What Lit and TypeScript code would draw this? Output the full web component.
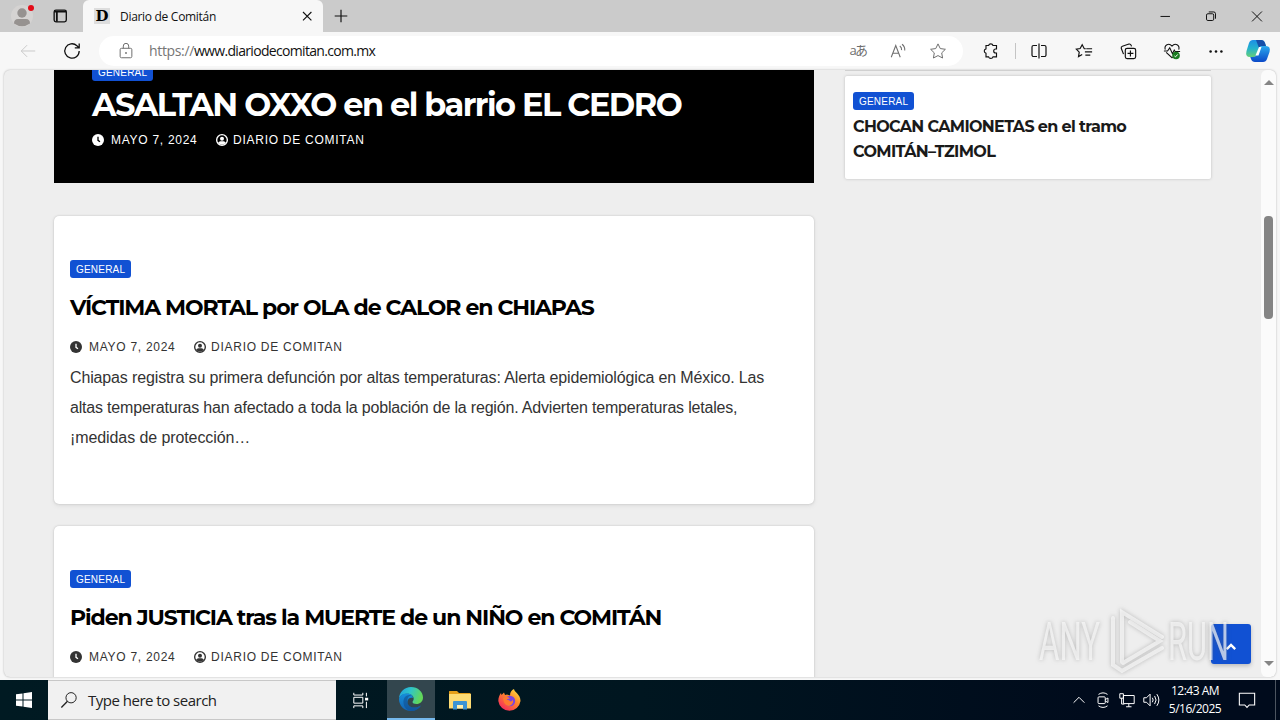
import { LitElement, html, svg, css, nothing } from "lit";
import { customElement, property } from "lit/decorators.js";

interface Post {
  title: string;
  date: string;
  author: string;
  excerpt?: string[];
}

const POSTS: Post[] = [
  {
    title: "VÍCTIMA MORTAL por OLA de CALOR en CHIAPAS",
    date: "MAYO 7, 2024",
    author: "DIARIO DE COMITAN",
    excerpt: [
      "Chiapas registra su primera defunción por altas temperaturas: Alerta epidemiológica en México. Las",
      "altas temperaturas han afectado a toda la población de la región. Advierten temperaturas letales,",
      "¡medidas de protección…",
    ],
  },
  {
    title: "Piden JUSTICIA tras la MUERTE de un NIÑO en COMITÁN",
    date: "MAYO 7, 2024",
    author: "DIARIO DE COMITAN",
  },
];

// ---------------------------------------------------------------------------
// Icons, all drawn on a 20x20 grid
// ---------------------------------------------------------------------------

const ICONS: Record<string, unknown> = {
  window: svg`<rect x="3.5" y="3.5" width="13.5" height="13" rx="2" stroke-width="1.5"/><path d="M3.5 5.2h13.5M6.5 5v11.5" stroke-width="2"/>`,
  close: svg`<path d="M5 5l10.500 10.500M15.500 5L5 15.500" stroke-width="1.4"/>`,
  plus: svg`<path d="M10 3v14M3 10h14" stroke-width="1.3"/>`,
  minimize: svg`<path d="M5 10.5h10.5"/>`,
  restore: svg`<rect x="5" y="7.5" width="8" height="7.5" rx="1.5"/><path d="M7.5 5.5h5.5a2 2 0 0 1 2 2v5.5"/>`,
  closeWindow: svg`<path d="M4.5 5l11 11M15.5 5l-11 11"/>`,
  back: svg`<path d="M18 10H2.5M9 3.5L2.5 10 9 16.5"/>`,
  refresh: svg`<path d="M17.2 10a7.2 7.2 0 1 1-2.3-5.3l2 1.9M17.2 2.5v4.4h-4.4" stroke-width="1.3"/>`,
  lock: svg`<rect x="3.5" y="7" width="13" height="10.5" rx="1.5"/><path d="M7 7V4.5a3 3 0 0 1 6 0V7"/><circle cx="10" cy="12.2" r="1" fill="currentColor" stroke="none"/>`,
  readAloud: svg`<path d="M2.5 17L7.5 4 12.5 17M4.3 12.5h6.4M12 4.5q2.3 1.6 2 4.5M14.5 2.5q3.4 2.5 3 7" stroke-width="1.2"/>`,
  star: svg`<path d="M10 2.1l2.5 5.2 5.7.8-4.1 4 1 5.7-5.1-2.7-5.1 2.7 1-5.7-4.1-4 5.7-.8z"/>`,
  puzzle: svg`<path d="M5 4.5h2.600a2.300 2.300 0 0 1 4.400 0H15.500V8h-.8a2 2 0 0 0 0 4h.8v3.800h-3.500a2.300 2.300 0 0 1-4.400 0H5v-3.600a2.200 2.200 0 0 1 0-4.300z" stroke-width="1.150"/>`,
  split: svg`<path d="M8 4.5H4.5A1.5 1.5 0 0 0 3 6v8A1.5 1.5 0 0 0 4.5 15.5H8M12 4.5h3.5A1.5 1.5 0 0 1 17 6v8a1.5 1.5 0 0 1-1.5 1.5H12M10 2.5v15" stroke-width="1.2"/>`,
  favorites: svg`<path d="M12 7.5H10.3L8 3 5.7 7.3 1.5 8l3.2 3.2-.8 5L8 14M12.5 7.5h6.5M11 11h8M11.5 14.5h5.5" stroke-width="1.3"/>`,
  collections: svg`<rect x="7" y="7" width="11.5" height="11.5" rx="2" stroke-width="1.3"/><path d="M12.7 9.5v6.5M9.5 12.7h6.5M5 13.5L2.5 7a2 2 0 0 1 1.3-2.3L11 2.3a2 2 0 0 1 2.4 1.2l.5 1.4" stroke-width="1.3"/>`,
  essentials: svg`<path d="M2.5 8.5C1 3.5 6.5.5 10 4.5c3.5-4 9-1 7.5 4M3.5 11.5L10 17.5l1-1M1 10h4L7.5 6.5 10.5 13l2-4 1 1.5h5.5" stroke-width="1.2"/><circle cx="14.5" cy="15" r="4.2" fill="#197b20" stroke="none"/><path d="M12.7 15.5l1.2 1 2.5-2.7" stroke="#fff"/>`,
  dots: svg`<g fill="currentColor" stroke="none"><circle cx="4" cy="10.5" r="1.4"/><circle cx="10" cy="10.5" r="1.4"/><circle cx="16" cy="10.5" r="1.4"/></g>`,
  clock: svg`<circle cx="10" cy="10" r="10" fill="currentColor" stroke="none"/><path class="cut" d="M10 4.5V10.5l3.3 2.3" stroke-width="2.2"/>`,
  user: svg`<circle cx="10" cy="10" r="8.9" stroke-width="2.3"/><circle cx="10" cy="7.8" r="3.3" fill="currentColor" stroke="none"/><path d="M3.5 15q1-3 4-3h5q3 0 4 3-6.500 6-13 0" fill="currentColor" stroke="none"/>`,
  chevron: svg`<path d="M4 13L10 7l6 6"/>`,
  search: svg`<circle cx="12.3" cy="7.5" r="5.7"/><path d="M8.3 11.5L1.5 18.3" stroke-width="1.5"/>`,
  taskView: svg`<path d="M2 2v2.500h10V2M2 7h10v6.500H2zM2 19v-2.500h10V19M16 2v4M16 12v7"/><path d="M14.500 7.500h3.500v3h-3.500z" fill="currentColor" stroke="none"/>`,
  meetNow: svg`<rect x="4.5" y="6.5" width="8" height="7.5" rx="1"/><path d="M12.5 9.5l3-1.7v5l-3-1.7M5 3.8q5-3.5 10 0M5 16.5q5 3.5 10 0"/>`,
  network: svg`<path d="M6 5h12v9H6zM9 17.5h6M12 14v3.5M2 3h4v5H2zM4 8v6.5h3"/>`,
  sound: svg`<path d="M2 7.5h3L9 3.5v13l-4-4H2zM11.5 7.5q1.8 2.5 0 5M14 5.5q3.3 4.5 0 9M16.5 3.5q4.5 6.5 0 13"/>`,
  notice: svg`<path d="M1.5 2.5h17v13h-6L10 18.2 7.5 15.5h-6z" stroke-width="1.2"/>`,
};

@customElement("ui-icon")
export class UiIcon extends LitElement {
  @property() name = "";

  static styles = css`
    :host {
      display: block;
      flex: none;
      width: 18px;
      height: 18px;
    }
    svg {
      display: block;
      width: 100%;
      height: 100%;
      overflow: visible;
      fill: none;
      stroke: currentColor;
      stroke-width: var(--stroke, 1.1);
    }
    .cut {
      stroke: var(--cut, #fff);
    }
  `;

  protected render() {
    return html`<svg viewBox="0 0 20 20">${ICONS[this.name] ?? nothing}</svg>`;
  }
}

@customElement("app-root")
export class AppRoot extends LitElement {
  // -------------------------------------------------------------------------
  // Browser chrome
  // -------------------------------------------------------------------------

  private _tabs() {
    return html`
      <div class="tabs">
        <div class="profile">
          <svg width="24" height="24" viewBox="0 0 24 24">
            <circle cx="12" cy="12" r="11" fill="#d5d3d2" />
            <circle cx="12" cy="9" r="4.7" fill="#969290" />
            <path d="M4 19.5q0-4.5 4-4.5h8q4 0 4 4.5-8 5.500-16 0" fill="#969290" />
            <circle cx="21" cy="4" r="3" fill="#e30b17" />
          </svg>
        </div>
        <div class="workspaces"><ui-icon name="window"></ui-icon></div>
        <div class="tab">
          <span class="favicon">D</span>
          <span class="tab-title">Diario de Comitán</span>
          <ui-icon class="i16" name="close"></ui-icon>
        </div>
        <div class="new-tab"><ui-icon name="plus"></ui-icon></div>
        <div class="controls">
          <div><ui-icon name="minimize"></ui-icon></div>
          <div><ui-icon name="restore"></ui-icon></div>
          <div><ui-icon name="closeWindow"></ui-icon></div>
        </div>
      </div>
    `;
  }

  private _toolbar() {
    return html`
      <div class="toolbar">
        <div class="tool back"><ui-icon name="back"></ui-icon></div>
        <div class="tool reload"><ui-icon class="i20" name="refresh"></ui-icon></div>
        <div class="address">
          <ui-icon name="lock"></ui-icon>
          <span class="url"><span class="scheme">https://</span>www.diariodecomitan.com.mx</span>
          <div class="hint translate">aあ</div>
          <div class="hint"><ui-icon name="readAloud"></ui-icon></div>
          <div class="hint"><ui-icon name="star"></ui-icon></div>
        </div>
        <div class="tool puzzle"><ui-icon class="i20" name="puzzle"></ui-icon></div>
        <div class="divider"></div>
        <div class="tool split"><ui-icon class="i20" name="split"></ui-icon></div>
        <div class="tool"><ui-icon name="favorites"></ui-icon></div>
        <div class="tool"><ui-icon name="collections"></ui-icon></div>
        <div class="tool"><ui-icon name="essentials"></ui-icon></div>
        <div class="tool"><ui-icon name="dots"></ui-icon></div>
        <div class="tool copilot">
          <svg width="26" height="24" viewBox="0 0 26 24">
            <defs>
              <linearGradient id="ca" x1="0" y1="0" x2="0" y2="1">
                <stop offset="0" stop-color="#1c8fe6" />
                <stop offset=".5" stop-color="#25b3cc" />
                <stop offset="1" stop-color="#65cf78" />
              </linearGradient>
              <linearGradient id="cb" x1="0" y1="0" x2="0" y2="1">
                <stop offset="0" stop-color="#2aa9ee" />
                <stop offset="1" stop-color="#0b49c8" />
              </linearGradient>
            </defs>
            <path d="M8 1h8q3 0 4 3l1 3h-4q-2 0-3 3l-2 6q-1 2-3 2H5Q0 18 1.5 12L4 4Q5 1 8 1z" fill="url(#ca)" />
            <path d="M11 1h5q3 0 4 3l1 3h-4q-2 0-3 2z" fill="#174fa8" />
            <path d="M18 23h-8q-3 0-4-3l-.7-2H8q3 0 4-3l2-6q1-2 3-2h4q5 0 3.5 6L22 20q-1 3-4 3z" fill="url(#cb)" />
            <path d="M14 8h2.5l-3 8.5H10.5z" fill="#fff" />
          </svg>
        </div>
      </div>
    `;
  }

  // -------------------------------------------------------------------------
  // Page
  // -------------------------------------------------------------------------

  private _meta(date: string, author: string) {
    return html`
      <div class="meta">
        <ui-icon name="clock"></ui-icon><span class="date">${date}</span>
        <ui-icon name="user"></ui-icon><span class="author">${author}</span>
      </div>
    `;
  }

  private _post(post: Post) {
    return html`
      <article class="post">
        <span class="badge">GENERAL</span>
        <h4>${post.title}</h4>
        ${this._meta(post.date, post.author)}
        <div class="excerpt">${post.excerpt?.map((line) => html`<div>${line}</div>`)}</div>
      </article>
    `;
  }

  private _page() {
    return html`
      <div class="page">
        <main>
          <section class="hero">
            <span class="badge">GENERAL</span>
            <h2>ASALTAN OXXO en el barrio EL CEDRO</h2>
            ${this._meta("MAYO 7, 2024", "DIARIO DE COMITAN")}
          </section>
          ${POSTS.map((post) => this._post(post))}
        </main>
        <aside>
          <div class="side-end"></div>
          <div class="side-card">
            <span class="badge">GENERAL</span>
            <h5>CHOCAN CAMIONETAS en el tramo<br />COMITÁN–TZIMOL</h5>
          </div>
        </aside>
        <div class="scrollbar">
          <span class="arrow up"></span>
          <span class="thumb"></span>
          <span class="arrow down"></span>
        </div>
        <div class="to-top"><ui-icon name="chevron"></ui-icon></div>
        <div class="watermark">
          <span>ANY</span>
          <svg width="54" height="66" viewBox="0 0 54 66">
            <path d="M3 10v47l9 6 40-23M12 54V4l40 25M20 14l30 19-37 22" />
          </svg>
          <span class="run">RUN</span>
        </div>
      </div>
    `;
  }

  // -------------------------------------------------------------------------
  // Taskbar
  // -------------------------------------------------------------------------

  private _taskbar() {
    return html`
      <div class="taskbar">
        <div class="start">
          <svg width="16" height="16" viewBox="0 0 16 16" fill="#fff">
            <path d="M0 2.3L6.5 1.4V7.5H0zM7.5 1.2L16 0v7.5H7.5zM0 8.5h6.5v6.1L0 13.7zM7.5 8.5H16V16l-8.5-1.2z" />
          </svg>
        </div>
        <div class="search">
          <ui-icon name="search"></ui-icon>
          <span>Type here to search</span>
        </div>
        <div class="app view"><ui-icon name="taskView"></ui-icon></div>
        <div class="app active">
          <svg width="24" height="24" viewBox="0 0 24 24">
            <defs>
              <linearGradient id="ea" x1="0" y1="0" x2="1" y2=".3">
                <stop offset="0" stop-color="#1e9de0" />
                <stop offset=".5" stop-color="#2fc5c9" />
                <stop offset="1" stop-color="#62d75a" />
              </linearGradient>
              <linearGradient id="eb" x1="0" y1="0" x2="0" y2="1">
                <stop offset="0" stop-color="#168fdb" />
                <stop offset="1" stop-color="#1263b4" />
              </linearGradient>
            </defs>
            <path d="M0 12C0 5 5.5 0 12 0c7 0 12 5 12 10.5 0 4-3 6.5-6.5 6.5-2.5 0-4-1-4-2 0-.8 1.2-1.3 1.2-3.2C14.7 9 12 6.8 8.5 6.8 4 6.8.5 9 0 12z" fill="url(#ea)" />
            <path d="M0 12c.5-3.5 4-5.5 8-5.5 3.5 0 6 2 6 4.5-2-1-5.5 0-5.5 4 0 4 4 6 8 5.5 2.5-.3 4.5-1.5 5.5-2C20 22 16.5 24 12 24 5 24 0 18.5 0 12z" fill="url(#eb)" />
            <path d="M4.5 16C4 10 8 7 12.5 8.2 9 9 8 11.5 8.5 15c.5 4 4.5 6 8 5.5 2.5-.3 4.5-1.5 5.5-2-2 3.5-5.5 5.5-9 5.5-5 0-8-3.5-8.5-8z" fill="#114a8b" opacity=".55" />
          </svg>
        </div>
        <div class="app">
          <svg width="22" height="20" viewBox="0 0 22 20">
            <path d="M0 1.5Q0 1 .5 1H8l2 2h11.5v4H0z" fill="#e59f19" />
            <path d="M0 4h22v14.5H0z" fill="#fddb73" />
            <path d="M4 12q0-1 1-1h12q1 0 1 1v7.5h-4V15H8v4.5H4z" fill="#3b94d4" />
            <path d="M8 15h6v3.5H8z" fill="#fff0ae" />
          </svg>
        </div>
        <div class="app">
          <svg width="23" height="23" viewBox="0 0 23 23">
            <defs>
              <linearGradient id="ff" x1="1" y1="0" x2=".2" y2="1">
                <stop offset="0" stop-color="#fff04a" />
                <stop offset=".45" stop-color="#ff8a2a" />
                <stop offset="1" stop-color="#f5245f" />
              </linearGradient>
            </defs>
            <path d="M3 4l.5 2L6 3.5 7 6l2-.5 3 1C12 3.5 13.5 1 16 0c0 3 6.5 5 6.5 12A11.2 11.2 0 0 1 .3 12C.3 8.5 1.5 6 3 4z" fill="url(#ff)" />
            <circle cx="12" cy="12" r="5.2" fill="#7b45e0" />
            <path d="M5 9q4-2 7 .5-3 0-3 1.5c2 0 3 .5 3 1.5 2 0 2.5-1 2.5-2 1.5 2 .5 5-3.5 6.5Q6 17 5 9z" fill="#ff7a30" />
          </svg>
        </div>
        <div class="tray">
          <ui-icon name="chevron"></ui-icon>
          <ui-icon name="meetNow"></ui-icon>
          <ui-icon name="network"></ui-icon>
          <ui-icon name="sound"></ui-icon>
          <div class="time"><div>12:43 AM</div><div>5/16/2025</div></div>
          <ui-icon name="notice"></ui-icon>
          <span class="peek"></span>
        </div>
      </div>
    `;
  }

  protected render() {
    return html`${this._tabs()}${this._toolbar()}${this._page()}${this._taskbar()}`;
  }

  // -------------------------------------------------------------------------
  // Styles
  // -------------------------------------------------------------------------

  static styles = css`
    :host {
      display: flex;
      flex-direction: column;
      width: 1280px;
      height: 720px;
      overflow: hidden;
      background: #f7f7f7;
      color: #111;
      font-family: "Open Sans", "Noto Sans", sans-serif;
    }
    * {
      box-sizing: border-box;
    }
    span,
    h2,
    h4,
    h5,
    .time,
    .excerpt {
      white-space: nowrap;
    }
    h2,
    h4,
    h5 {
      margin: 0;
      font-family: Montserrat, Inter, sans-serif;
      font-weight: 700;
    }
    .i16 {
      width: 16px;
      height: 16px;
    }
    .i20 {
      width: 20px;
      height: 20px;
    }

    .tabs {
      display: flex;
      flex: none;
      height: 32px;
      background: #cbcbcb;
    }
    .tabs > div {
      display: flex;
      align-items: center;
    }
    .profile {
      width: 44px;
      padding-left: 10px;
    }
    .workspaces {
      width: 39px;
      padding-left: 7px;
    }
    .tab {
      width: 240px;
      padding: 0 8px 0 11px;
      background: #f7f7f7;
      border-radius: 6px 6px 0 0;
    }
    .favicon {
      width: 16px;
      height: 16px;
      margin-right: 10px;
      background: #ddd;
      color: #000;
      font: 900 15px/16px "DejaVu Serif", serif;
      text-align: center;
    }
    .tab-title {
      flex: 1;
      font-size: 12px;
      letter-spacing: -0.3px;
    }
    .new-tab {
      padding-left: 9px;
    }
    .controls {
      margin-left: auto;
    }
    .controls div {
      display: flex;
      justify-content: center;
      width: 46px;
    }

    .toolbar {
      display: flex;
      flex: none;
      align-items: center;
      height: 38px;
      background: #f7f7f7;
    }
    .tool {
      display: flex;
      justify-content: center;
      width: 44px;
    }
    .back {
      width: 56px;
      color: #c9c9c9;
    }
    .reload {
      width: 32px;
    }
    .address {
      display: flex;
      align-items: center;
      width: 864px;
      height: 30px;
      margin: 0 4px 0 11px;
      padding: 0 5px 0 18px;
      border-radius: 15px;
      background: #fff;
      color: #6e6e6e;
    }
    .url {
      flex: 1;
      margin-left: 14px;
      padding-bottom: 1px;
      color: #111;
      font-size: 14px;
      letter-spacing: -0.68px;
    }
    .scheme {
      color: #767676;
      letter-spacing: -0.35px;
    }
    .hint {
      display: flex;
      justify-content: center;
      width: 40px;
    }
    .translate {
      padding-bottom: 2px;
      font: 13px/18px "Open Sans", "Noto Sans CJK JP", sans-serif;
      letter-spacing: -1.5px;
    }
    .puzzle {
      width: 48px;
    }
    .divider {
      width: 1px;
      height: 16px;
      background: #c4c4c4;
    }
    .split {
      width: 46px;
    }
    .copilot {
      width: 40px;
    }

    .page {
      position: relative;
      display: flex;
      flex: none;
      width: 1272px;
      height: 607px;
      margin: 0 4px 3px;
      padding-left: 50px;
      overflow: hidden;
      border-radius: 6px;
      background: #eee;
      box-shadow: 0 0 2px #aaa;
    }
    main {
      width: 760px;
      margin-right: 31px;
    }
    .badge {
      display: block;
      width: 61px;
      height: 18px;
      padding-left: 6px;
      border-radius: 3px;
      background: #1151d3;
      color: #fff;
      font: 10px/19px "Liberation Sans", Arial, sans-serif;
      letter-spacing: 0.2px;
    }
    .hero {
      height: 113px;
      padding-left: 38px;
      overflow: hidden;
      background: #000;
      color: #fff;
      --cut: #000;
    }
    .hero .badge {
      margin-top: -7px;
    }
    .hero h2 {
      margin-top: 4px;
      font-size: 32px;
      line-height: 40px;
      letter-spacing: -1.54px;
    }
    .meta {
      display: flex;
      align-items: center;
      height: 20px;
      font: 12px/20px "Liberation Sans", Arial, sans-serif;
    }
    .hero .meta {
      margin-top: 5px;
    }
    .meta ui-icon {
      width: 12px;
      height: 12px;
    }
    .date {
      width: 112px;
      padding-left: 7px;
      letter-spacing: 0.72px;
    }
    .author {
      padding-left: 5px;
      letter-spacing: 0.74px;
    }
    .post {
      height: 288px;
      margin-top: 22px;
      padding: 44px 16px 0;
      border-radius: 5px;
      background: #fff;
      box-shadow: 0 0 2px #bbb, 0 2px 4px #ddd;
      color: #333;
    }
    .hero + .post {
      margin-top: 33px;
    }
    .post h4 {
      margin: 15px 0 14px;
      color: #000;
      font-size: 22px;
      line-height: 30px;
      letter-spacing: -1.1px;
    }
    .excerpt {
      margin-top: 6px;
      color: #333;
      font: 16px/30px "Liberation Sans", Arial, sans-serif;
      letter-spacing: -0.14px;
    }
    .excerpt div:nth-child(2) {
      letter-spacing: -0.19px;
    }
    .excerpt div:nth-child(3) {
      letter-spacing: -0.09px;
    }
    aside {
      width: 366px;
      flex: none;
    }
    .side-end {
      height: 1px;
      background: #d0d0d0;
    }
    .side-card {
      height: 103px;
      margin-top: 5px;
      padding: 16px 8px;
      border-radius: 2px;
      background: #fff;
      box-shadow: 0 0 3px #bbb;
    }
    h5 {
      margin-top: 4px;
      color: #1a1a1a;
      font-size: 16px;
      line-height: 25px;
      letter-spacing: -0.66px;
    }
    .scrollbar {
      display: flex;
      flex-direction: column;
      align-items: center;
      width: 15px;
      margin-left: 50px;
      padding: 10px 0 11px;
      border-radius: 6px;
      background: #fbfbfb;
    }
    .arrow {
      border: 5px solid transparent;
    }
    .up {
      border-top: 0;
      border-bottom-color: #858585;
    }
    .down {
      margin-top: auto;
      border-bottom: 0;
      border-top-color: #858585;
    }
    .thumb {
      width: 9px;
      height: 103px;
      margin-top: 131px;
      border-radius: 4px;
      background: #858585;
    }
    .to-top {
      position: absolute;
      left: 1207px;
      top: 554px;
      display: flex;
      align-items: center;
      justify-content: center;
      width: 40px;
      height: 40px;
      border-radius: 3px;
      background: #1151d3;
      color: #fff;
      box-shadow: 0 2px 4px #bbb;
      --stroke: 3.4;
    }
    .to-top ui-icon {
      width: 14px;
      height: 14px;
      margin-top: 5px;
    }
    .watermark {
      position: absolute;
      left: 1035px;
      top: 537px;
      display: flex;
      align-items: center;
      color: rgba(250, 250, 250, 0.7);
      filter: drop-shadow(0 0 2px rgba(90, 90, 90, 0.5));
    }
    .watermark span {
      width: 71px;
      padding-top: 2px;
      font: 400 53px/66px Roboto, sans-serif;
      transform: scaleX(0.59);
      transform-origin: left;
    }
    .watermark .run {
      width: 64px;
      transform: scaleX(0.58);
    }
    .watermark svg {
      margin-right: 4px;
      fill: none;
      stroke: currentColor;
      stroke-width: 4;
      stroke-linecap: round;
    }

    .taskbar {
      display: flex;
      flex: none;
      height: 40px;
      background: linear-gradient(90deg, #001a22, #001620 50%, #000b1c 85%);
      color: #fff;
    }
    .start {
      display: flex;
      align-items: center;
      justify-content: center;
      width: 48px;
    }
    .search {
      display: flex;
      align-items: center;
      width: 288px;
      padding-left: 12px;
      border: solid #c8c8c8;
      border-width: 1px 0;
      background: #f1f1f1;
      color: #222;
      font-size: 15px;
    }
    .search span {
      margin-left: 10px;
      letter-spacing: -0.5px;
    }
    .app {
      display: flex;
      align-items: center;
      justify-content: center;
      width: 48px;
      margin-right: 1px;
    }
    .view {
      width: 50px;
      padding-right: 1px;
    }
    .active {
      border-bottom: 2px solid #76b9ed;
      background: #33464e;
    }
    .tray {
      display: flex;
      align-items: center;
      gap: 6px;
      margin-left: auto;
    }
    .time {
      width: 58px;
      font-size: 12px;
      line-height: 18px;
      text-align: center;
      letter-spacing: -0.5px;
    }
    .tray .time + ui-icon {
      margin-left: 8px;
    }
    .peek {
      width: 5px;
      height: 40px;
      margin-left: 13px;
      border-left: 1px solid #4c5560;
    }
  `;
}
